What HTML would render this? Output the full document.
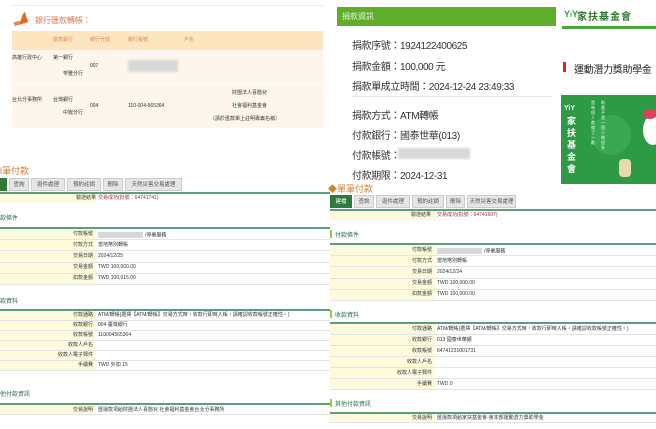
<!DOCTYPE html>
<html><head><meta charset="utf-8">
<style>
*{margin:0;padding:0;box-sizing:border-box}
body{width:656px;height:429px;background:#fff;position:relative;overflow:hidden;font-family:"Liberation Sans","Noto Sans CJK TC",sans-serif;color:#333}
.a{position:absolute;white-space:nowrap}
.s{font-size:5px;line-height:1}
.tab{position:absolute;height:13px;background:#e6e6e6;border:1px solid #ccc;font-size:5.5px;line-height:12px;text-align:center;color:#555}
.gl{position:absolute;height:2px;background:#5a9e7a}
.blur{position:absolute;background:#d8d8d8;filter:blur(1px)}
.big{font-size:10px;letter-spacing:-0.4px;color:#333}
</style></head><body>

<div class="a" style="left:10px;top:5px;width:314px;height:1px;background:#f3ece2"></div>
<div class="a" style="left:12px;top:10px;width:18px;height:18px">
<svg width="18" height="18" viewBox="0 0 18 18"><path d="M2 16 C4 12 8 12 9 10 C10 6 11 3 13 2 C14 5 15 9 16 12 C13 13 10 14 6 15 Z" fill="#e8642a"/><path d="M1 13 C4 11 7 11 9 11 L8 15 C5 15 3 15 1 13Z" fill="#f08a4a"/></svg></div>
<div class="a" style="left:35px;top:15px;font-size:8px;color:#d97a55">銀行匯款轉帳：</div>
<div class="a" style="left:12px;top:31px;width:311px;height:19px;background:#fde5c0"></div>
<div class="a" style="left:12px;top:50px;width:311px;height:78px;background:#fdf6ec"></div>
<div class="a" style="left:12px;top:83px;width:311px;height:1px;background:#fff"></div>
<div class="a s" style="left:53px;top:38px;color:#d98a50">匯款銀行</div>
<div class="a s" style="left:90px;top:38px;color:#d98a50">銀行代號</div>
<div class="a s" style="left:128px;top:38px;color:#d98a50">銀行帳號</div>
<div class="a s" style="left:184px;top:38px;color:#d98a50">戶名</div>
<div class="a s" style="left:12px;top:56px">高雄行政中心</div>
<div class="a s" style="left:53px;top:56px">第一銀行</div>
<div class="a s" style="left:63px;top:72px">苓雅分行</div>
<div class="a s" style="left:90px;top:64px">007</div>
<div class="blur" style="left:128px;top:60px;width:50px;height:12px"></div>
<div class="a s" style="left:12px;top:98px">台北分事務所</div>
<div class="a s" style="left:53px;top:98px">台灣銀行</div>
<div class="a s" style="left:63px;top:111px">中崙分行</div>
<div class="a s" style="left:90px;top:104px">004</div>
<div class="a s" style="left:128px;top:104px">110-004-565364</div>
<div class="a s" style="left:232px;top:91px">財團法人喜憨兒</div>
<div class="a s" style="left:232px;top:104px">社會福利基金會</div>
<div class="a s" style="left:210px;top:117px">（請於匯款單上註明專案名稱）</div>

<div class="a" style="left:337px;top:7px;width:219px;height:19px;background:#5fae2a;color:#eaf6df;font-size:8px;line-height:19px;padding-left:5px">捐款資訊</div>
<div class="a big" style="left:352px;top:37px">捐款序號：1924122400625</div>
<div class="a big" style="left:352px;top:58px">捐款金額：100,000 元</div>
<div class="a big" style="left:352px;top:78px">捐款單成立時間：2024-12-24 23:49:33</div>
<div class="a" style="left:352px;top:96px;width:200px;height:1px;background:#e6e6e6"></div>
<div class="a big" style="left:352px;top:107px">捐款方式：ATM轉帳</div>
<div class="a big" style="left:352px;top:127px">付款銀行：國泰世華(013)</div>
<div class="a big" style="left:352px;top:147px">付款帳號：</div>
<div class="blur" style="left:398px;top:148px;width:72px;height:11px"></div>
<div class="a big" style="left:352px;top:167px">付款期限：2024-12-31</div>
<div class="a" style="left:564px;top:9px;font-size:9px;color:#3a9a3a;font-weight:bold">Y<span style="font-size:7px">i</span>Y</div>
<div class="a" style="left:577px;top:8px;font-size:10px;color:#2e7a2e;font-weight:bold;letter-spacing:1px">家扶基金會</div>
<div class="a" style="left:562px;top:26px;width:94px;height:3px;background:#48a838"></div>
<div class="a" style="left:563px;top:62px;width:3px;height:10px;background:#d22"></div>
<div class="a" style="left:574px;top:61px;font-size:10px;color:#222;letter-spacing:-0.3px">運動潛力獎助學金</div>
<div class="a" style="left:561px;top:95px;width:95px;height:89px;background:#2e9a46;overflow:hidden">
 <div class="a" style="left:30px;top:20px;width:40px;height:40px;border-radius:50%;background:#3aa852"></div>
 <div class="a" style="left:3px;top:10px;color:#fff;font-size:7px;font-weight:bold">YiY</div>
 <div class="a" style="left:6px;top:20px;color:#fff;font-size:9px;line-height:12px;width:10px;white-space:normal;font-weight:bold">家扶基金會</div>
 <div class="a" style="left:30px;top:5px;color:#dfe;font-size:4px;line-height:5px;width:5px;white-space:normal">是每個人都做了一點</div>
 <div class="a" style="left:40px;top:5px;color:#dfe;font-size:4px;line-height:5px;width:5px;white-space:normal">助貧不是一個人做很多</div>
 <div class="a" style="left:82px;top:20px;width:20px;height:30px;border-radius:50%;background:#fff"></div>
 <div class="a" style="left:82px;top:14px;width:14px;height:10px;border-radius:50%;background:#e04060"></div>
 <div class="a" style="left:58px;top:64px;width:12px;height:18px;background:#e8d8b0;border-radius:4px"></div>
</div>

<div class="a" style="left:0;top:164px;font-size:9px;color:#c97a40">l筆付款</div>
<div class="tab" style="left:0;top:178px;width:7px;background:#2e7a3a;border-color:#2e7a3a"></div>
<div class="tab" style="left:9px;top:178px;width:20px">查詢</div>
<div class="tab" style="left:31px;top:178px;width:34px">退件處理</div>
<div class="tab" style="left:67px;top:178px;width:34px">預約註銷</div>
<div class="tab" style="left:103px;top:178px;width:20px">刪除</div>
<div class="tab" style="left:125px;top:178px;width:57px">天然災害交易處理</div>
<div class="gl" style="left:0;top:192px;width:330px"></div>
<div class="a" style="left:0;top:194px;width:96px;height:9px;background:#fdfbdc"></div>
<div class="a s" style="left:76px;top:196px">驗證結果</div>
<div class="a s" style="left:98px;top:196px;color:#a03030">交易成功(批號：64741741)</div>

<div class="a" style="left:0;top:213px;font-size:6px;color:#2a6a4a">款條件</div>
<div class="gl" style="left:0;top:227px;width:330px"></div>
<div class="a" style="left:0;top:296px;font-size:6px;color:#2a6a4a">款資料</div>
<div class="gl" style="left:0;top:309px;width:330px"></div>
<div class="a" style="left:0;top:389px;font-size:6px;color:#2a6a4a">他付款資訊</div>
<div class="gl" style="left:0;top:403px;width:330px"></div>

<div class="a" style="left:328px;top:182px;font-size:9px;color:#d2823a">◆單筆付款</div>
<div class="tab" style="left:330px;top:195px;width:22px;background:#2e7a3a;border-color:#2e7a3a;color:#fff">建檔</div>
<div class="tab" style="left:354px;top:195px;width:20px">查詢</div>
<div class="tab" style="left:376px;top:195px;width:34px">退件處理</div>
<div class="tab" style="left:412px;top:195px;width:32px">預約註銷</div>
<div class="tab" style="left:446px;top:195px;width:19px">刪除</div>
<div class="tab" style="left:467px;top:195px;width:49px">天然災害交易處理</div>
<div class="gl" style="left:330px;top:209px;width:326px"></div>
<div class="a" style="left:330px;top:211px;width:105px;height:9px;background:#fdfbdc"></div>
<div class="a s" style="left:411px;top:213px">驗證結果</div>
<div class="a s" style="left:437px;top:213px;color:#a03030">交易成功(批號：64741607)</div>
<div class="a" style="left:330px;top:230px;width:2px;height:8px;background:#9c3"></div>
<div class="a" style="left:335px;top:230px;font-size:6px;color:#2a6a4a">付款條件</div>
<div class="gl" style="left:330px;top:243px;width:326px"></div>
<div class="a" style="left:330px;top:310px;width:2px;height:8px;background:#9c3"></div>
<div class="a" style="left:335px;top:310px;font-size:6px;color:#2a6a4a">收款資料</div>
<div class="gl" style="left:330px;top:322px;width:326px"></div>
<div class="a" style="left:330px;top:399px;width:2px;height:8px;background:#9c3"></div>
<div class="a" style="left:335px;top:399px;font-size:6px;color:#2a6a4a">其他付款資訊</div>
<div class="gl" style="left:330px;top:412px;width:326px"></div>

<script>
function rows(x,w,lw,y,h,data){
 data.forEach(function(d,i){
  var t=y+i*h;
  var r=document.createElement('div');r.className='a';
  r.style.cssText='left:'+x+'px;top:'+t+'px;width:'+w+'px;height:'+h+'px;border-bottom:1px solid #e4e4e4';
  r.innerHTML='<div class="a" style="left:0;top:0;width:'+lw+'px;height:'+(h-1)+'px;background:#fdfbdc"></div>'+
  '<div class="a s" style="right:'+(w-lw+3)+'px;top:'+(h/2-3)+'px">'+d[0]+'</div>'+
  '<div class="a s" style="left:'+(lw+2)+'px;top:'+(h/2-3)+'px">'+d[1]+'</div>';
  document.body.appendChild(r);
 });
}
var blur='<span style="display:inline-block;width:45px;height:6px;background:#d8d8d8;vertical-align:middle;margin-right:2px"></span>';
rows(0,330,96,229,11.2,[["付款帳號",blur+"/停業服務"],["付款方式","當地幣別轉帳"],["交易日期","2024/12/25"],["交易金額","TWD 100,000.00"],["扣款金額","TWD 100,015.00"]]);
rows(0,330,96,311,10,[["付款通路","ATM/轉帳(選擇【ATM/轉帳】交易方式時，收款行即時入帳，請確認收款帳號正確性。)"],["收款銀行","004 臺灣銀行"],["收款帳號","110004565364"],["收款人戶名",""],["收款人電子郵件",""],["手續費","TWD 外加 15"]]);
rows(0,330,96,406,9,[["交易說明","匯還款項給財團法人喜憨兒 社會福利基金會台北分事務所"]]);
rows(330,326,105,245,11.2,[["付款帳號",blur+"/停業服務"],["付款方式","當地幣別轉帳"],["交易日期","2024/12/24"],["交易金額","TWD 100,000.00"],["扣款金額","TWD 100,000.00"]]);
rows(330,326,105,324,11,[["付款通路","ATM/轉帳(選擇【ATM/轉帳】交易方式時，收款行即時入帳，請確認收款帳號正確性。)"],["收款銀行","013 國泰世華銀"],["收款帳號","64741231001731"],["收款人戶名",""],["收款人電子郵件",""],["手續費","TWD 0"]]);
rows(330,326,105,414,9,[["交易說明","匯還款項給家扶基金會-會本部運動潛力獎助學金"]]);
</script>
</body></html>
